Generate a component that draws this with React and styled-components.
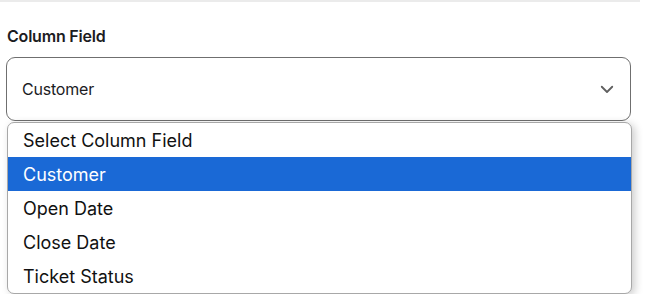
import React, { useState } from 'react';
import styled, { createGlobalStyle } from 'styled-components';

const GlobalStyle = createGlobalStyle`
  body {
    margin: 0;
    background: #ffffff;
    font-family: Inter, "Noto Sans", sans-serif;
  }
`;

const Page = styled.div`
  height: 294px;
  overflow: hidden;
  padding-left: 6px;
`;

const Divider = styled.div`
  height: 2px;
  width: 640px;
  margin-left: -6px;
  background: #ebebeb;
`;

const Field = styled.div`
  width: 625px;
  margin-top: 25px;
`;

const Label = styled.div`
  font-size: 16px;
  font-weight: 600;
  line-height: 18px;
  letter-spacing: -0.2px;
  color: #1c1c1f;
  margin-left: 1px;
  margin-bottom: 12px;
`;

const SelectWrap = styled.div`
  position: relative;
`;

const SelectBox = styled.div`
  box-sizing: border-box;
  height: 64px;
  display: flex;
  align-items: center;
  justify-content: space-between;
  padding: 0 14px 0 15px;
  border: 1px solid #6f6f6f;
  border-radius: 9px;
  font-size: 16px;
  letter-spacing: -0.2px;
  color: #1c1c1f;
`;

const Chevron = styled.svg`
  width: 18px;
  height: 18px;
  color: #5f5f5f;
`;

const Menu = styled.ul`
  position: absolute;
  left: 1px;
  top: calc(100% + 1px);
  width: 625px;
  box-sizing: border-box;
  margin: 0;
  padding: 0;
  list-style: none;
  background: #ffffff;
  border: 1px solid #a8a8a8;
  border-radius: 7px;
  box-shadow: 3px 2px 8px rgba(0, 0, 0, 0.2);
  overflow: hidden;
  z-index: 2;
`;

const Option = styled.li`
  height: 34px;
  display: flex;
  align-items: center;
  padding-left: 15px;
  font-size: 18px;
  color: ${({ $active }) => ($active ? '#ffffff' : '#111111')};
  background: ${({ $active }) => ($active ? '#1a69d6' : 'transparent')};
`;

const options = ['Select Column Field', 'Customer', 'Open Date', 'Close Date', 'Ticket Status'];

export default function App() {
  const [value] = useState('Customer');
  return (
    <>
      <GlobalStyle />
      <Page>
        <Divider />
        <Field>
          <Label>Column Field</Label>
          <SelectWrap>
            <SelectBox>
              <span>{value}</span>
              <Chevron viewBox="0 0 24 24" fill="none" stroke="currentColor" strokeWidth="2.4" strokeLinecap="round" strokeLinejoin="round">
                <path d="M5 9l7 7 7-7" />
              </Chevron>
            </SelectBox>
            <Menu>
              {options.map((o) => (
                <Option key={o} $active={o === value}>
                  {o}
                </Option>
              ))}
            </Menu>
          </SelectWrap>
        </Field>
      </Page>
    </>
  );
}
